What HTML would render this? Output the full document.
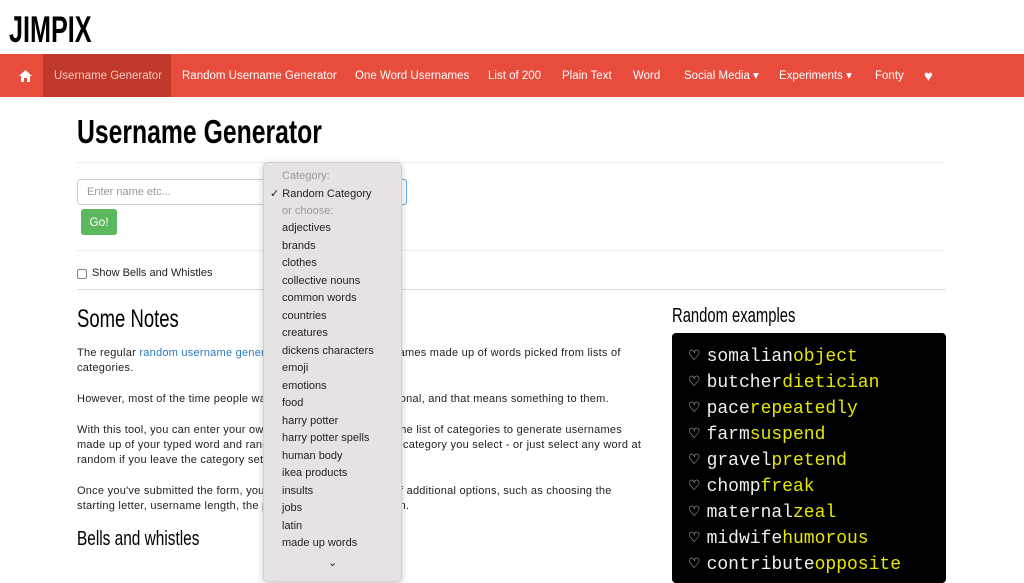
<!DOCTYPE html>
<html><head><meta charset="utf-8"><style>
*{margin:0;padding:0;box-sizing:border-box}
body{width:1024px;height:567px;overflow:hidden;background:#fff;font-family:"Liberation Sans",sans-serif;color:#222;position:relative}
.n{font-family:"Liberation Sans",sans-serif;color:#000;transform-origin:0 0;white-space:nowrap}
.abs{position:absolute}
nav{position:absolute;top:54px;left:0;width:1024px;height:43px;background:#e74c3c}
nav span{position:absolute;top:0;height:43px;line-height:45px;color:#fff;font-size:11.5px;white-space:nowrap}
.hr{position:absolute;left:77px;width:869px;height:1px;background:#eee}
p{position:absolute;left:77px;width:570px;font-size:11px;line-height:15px;color:#222;letter-spacing:0.25px}
.dd{position:absolute;left:263px;top:162px;width:139px;height:420px;background:#e8e3e3;border:1px solid #d4cfcf;border-radius:5px;box-shadow:0 2px 8px rgba(0,0,0,.2);font-size:11px}
.dd div{position:absolute;left:18px;white-space:nowrap;color:#222}
.ex{position:absolute;left:672px;top:333px;width:274px;height:250px;background:#000;border-radius:4px;font-family:"Liberation Mono",monospace;font-size:18px;color:#eee}
.ex div{position:absolute;left:16px;white-space:nowrap}
.ex b{font-weight:normal;color:#e6e600}
.ex i{font-style:normal;font-size:14px;font-weight:bold;margin-right:6px;font-family:"DejaVu Sans",sans-serif;position:relative;top:-1px}
</style></head><body>
<div class="abs n" style="left:9px;top:9px;font-size:37px;font-weight:bold;transform:scaleX(0.68)">JIMPIX</div>
<nav>
<span style="left:19px"><svg width="13" height="12" viewBox="0 0 13 12" style="margin-top:16px"><path d="M6.5 0 L13 6 L11 6 L11 12 L8 12 L8 8 L5 8 L5 12 L2 12 L2 6 L0 6 Z" fill="#fff"/></svg></span>
<span style="left:43px;width:128px;background:#c0392b;color:#f5c6c0;padding-left:11px">Username Generator</span>
<span style="left:182px">Random Username Generator</span>
<span style="left:355px">One Word Usernames</span>
<span style="left:488px">List of 200</span>
<span style="left:562px">Plain Text</span>
<span style="left:633px">Word</span>
<span style="left:684px">Social Media ▾</span>
<span style="left:779px">Experiments ▾</span>
<span style="left:875px">Fonty</span>
<span style="left:924px;font-size:15px">&#9829;</span>
</nav>
<div class="abs n" style="left:77px;top:113px;font-size:33px;font-weight:bold;transform:scaleX(0.75)">Username Generator</div>
<div class="hr" style="top:162px"></div>
<div class="abs" style="left:77px;top:179px;width:330px;height:26px;border:1px solid #ccc;border-radius:3px;font-size:11px;color:#999;padding:6px 9px">Enter name etc...</div>
<div class="abs" style="left:402px;top:179px;width:5px;height:26px;border:1px solid #66afe9;border-left:none;border-radius:0 3px 3px 0"></div>
<div class="abs" style="left:81px;top:209px;width:36px;height:26px;background:#5cb85c;border-radius:3px;color:#fff;font-size:12px;text-align:center;line-height:26px">Go!</div>
<div class="hr" style="top:250px"></div>
<div class="abs" style="left:77px;top:269px;width:10px;height:10px;border:1px solid #888;border-radius:2px"></div>
<div class="abs" style="left:92px;top:267px;font-size:11px">Show Bells and Whistles</div>
<div class="hr" style="top:289px;background:#ddd"></div>
<div class="abs n" style="left:77px;top:305px;font-size:25px;transform:scaleX(0.74)">Some Notes</div>
<p style="top:346px">The regular <span style="color:#2a7ac0">random username generator</span> creates a list of usernames made up of words picked from lists of categories.</p>
<p style="top:392px">However, most of the time people want a username that is personal, and that means something to them.</p>
<p style="top:423px">With this tool, you can enter your own word, then choose from the list of categories to generate usernames made up of your typed word and random words from whichever category you select - or just select any word at random if you leave the category set to random.</p>
<p style="top:484px">Once you've submitted the form, you will also be given a load of additional options, such as choosing the starting letter, username length, the position of words, and so on.</p>
<div class="abs n" style="left:77px;top:528px;font-size:20px;transform:scaleX(0.77)">Bells and whistles</div>
<div class="abs n" style="left:672px;top:305px;font-size:20px;transform:scaleX(0.74)">Random examples</div>
<div class="ex">
<div style="top:14px"><i>♡</i>somalian<b>object</b></div>
<div style="top:40px"><i>♡</i>butcher<b>dietician</b></div>
<div style="top:66px"><i>♡</i>pace<b>repeatedly</b></div>
<div style="top:92px"><i>♡</i>farm<b>suspend</b></div>
<div style="top:118px"><i>♡</i>gravel<b>pretend</b></div>
<div style="top:144px"><i>♡</i>chomp<b>freak</b></div>
<div style="top:170px"><i>♡</i>maternal<b>zeal</b></div>
<div style="top:196px"><i>♡</i>midwife<b>humorous</b></div>
<div style="top:222px"><i>♡</i>contribute<b>opposite</b></div>
</div>
<div class="dd">
<div style="top:7px;color:#999">Category:</div>
<div style="top:24px;left:6px">✓ Random Category</div>
<div style="top:42px;color:#999">or choose:</div>
<div style="top:59px">adjectives</div>
<div style="top:77px">brands</div>
<div style="top:94px">clothes</div>
<div style="top:112px">collective nouns</div>
<div style="top:129px">common words</div>
<div style="top:147px">countries</div>
<div style="top:164px">creatures</div>
<div style="top:182px">dickens characters</div>
<div style="top:199px">emoji</div>
<div style="top:217px">emotions</div>
<div style="top:234px">food</div>
<div style="top:252px">harry potter</div>
<div style="top:269px">harry potter spells</div>
<div style="top:287px">human body</div>
<div style="top:304px">ikea products</div>
<div style="top:322px">insults</div>
<div style="top:339px">jobs</div>
<div style="top:357px">latin</div>
<div style="top:374px">made up words</div>
<div style="top:393px;left:64px">⌄</div>
</div>
</body></html>
